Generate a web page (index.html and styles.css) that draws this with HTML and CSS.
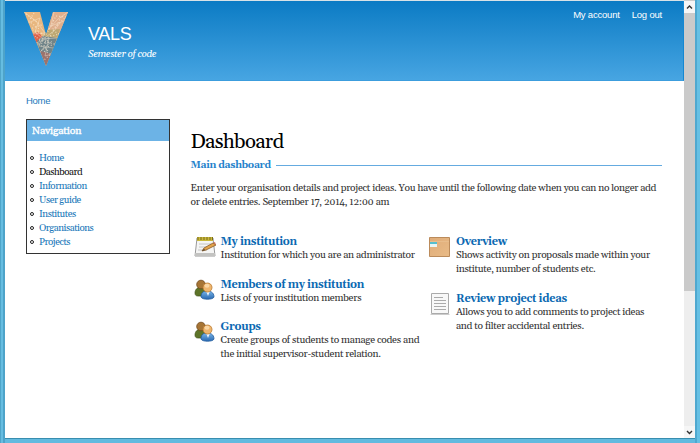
FILE: index.html
```html
<!DOCTYPE html>
<html lang="en">
<head>
<meta charset="utf-8">
<title>Dashboard | VALS</title>
<link rel="stylesheet" href="styles.css">
</head>
<body>
<svg width="0" height="0" class="defs" aria-hidden="true">
  <defs>
    <linearGradient id="blue" x2="0" y2="1"><stop stop-color="#79b5e8"/><stop offset="1" stop-color="#2869b1"/></linearGradient>
    <linearGradient id="tan" x2="1" y2="1"><stop stop-color="#dfac78"/><stop offset="1" stop-color="#e9bb87"/></linearGradient>
    <symbol id="people" viewBox="0 0 22 22">
      <path d="M1 14c0-4 3-6 6-6s6 2 6 6l-3 3H4c-2 0-3-1-3-3z" fill="#5d7428" stroke="#405219" stroke-width=".7"/>
      <circle cx="7" cy="5.500" r="4.300" fill="#a77535" stroke="#71491c" stroke-width=".8"/>
      <path d="M7 18c0-5 3-6 6-6s7 1 7 6c-1 3-12 3-13 0z" fill="url(#blue)" stroke="#235da0" stroke-width=".8"/>
      <path d="M12 12l2 5 2-5z" fill="#eef5fc"/>
      <circle cx="13.500" cy="8.500" r="4.500" fill="#eeb56d" stroke="#b9792e" stroke-width=".8"/>
      <ellipse cx="13" cy="6.800" rx="2.500" ry="2" fill="#fad7a4"/>
    </symbol>
  </defs>
</svg>
<div class="window">
  <div class="page">
    <header class="header">
      <svg class="logo" width="46" height="56" viewBox="0 0 46 56" aria-hidden="true">
        <defs><clipPath id="vee"><path d="M1 1H17L23 24 30 1H45L23 55z"/></clipPath></defs>
        <g clip-path="url(#vee)">
          <path d="M0 0H46V56H0z" fill="#e9b780"/>
          <path d="M17 0H46V23L27 20z" fill="#dfb08e"/>
          <path d="M9 23L16 21 20 28 13 32z" fill="#dc634c"/>
          <path d="M23 19L37 18 34 28 20 25z" fill="#bea873"/>
          <path d="M14 30L20 25 34 27 28 44 17 41z" fill="#718489"/>
          <path d="M17 40L29 43 23 56z" fill="#9b736e"/>
          <g class="mesh">
            <path d="M1 1L13 10 22 22 35 8 45 1M5 12L17 7 12 21 20 28 31 20 37 12M10 23L22 22 16 35 30 37M13 32L26 27 22 45 29 43M20 28L34 27M17 41L29 30M31 1L28 15 41 10"/>
            <path class="dots" d="M3 3L18 14 7 18 23 24 33 5 43 6 29 19 36 23 15 29 31 33 18 39 28 43 21 49"/>
            <path class="dots" d="M11 2L6 10 16 18 12 26 25 31 16 33 25 40 21 35 34 14 39 4"/>
          </g>
        </g>
      </svg>
      <div class="brand">
        <div class="site-name">VALS</div>
        <div class="slogan">Semester of code</div>
      </div>
      <nav class="user-menu"><a>My account</a><a>Log out</a></nav>
    </header>
    <div class="breadcrumb">Home</div>
    <div class="columns">
      <aside class="navigation">
        <h2>Navigation</h2>
        <ul>
          <li><a>Home</a></li>
          <li class="active"><a>Dashboard</a></li>
          <li><a>Information</a></li>
          <li><a>User guide</a></li>
          <li><a>Institutes</a></li>
          <li><a>Organisations</a></li>
          <li><a>Projects</a></li>
        </ul>
      </aside>
      <main>
        <h1>Dashboard</h1>
        <div class="legend"><span>Main dashboard</span></div>
        <p class="intro">Enter your organisation details and project ideas. You have until the following date when you can no longer add<br>or delete entries. September 17, 2014, 12:00 am</p>
        <div class="cards">
          <div class="stack">
            <section class="card">
              <svg width="22" height="22" viewBox="0 0 22 22"><path d="M3 2H19L21 20H1z" fill="#f5f5f4" stroke="#999" /><path d="M1 17H21V20H1z" fill="#c3c3c1"/><path d="M3 1H19V5H3z" fill="#c9b83b"/><path d="M4 1V4M7 1V4M10 1V4M13 1V4M16 1V4M18.500 1V4" stroke="#786b1c"/><path d="M5 8H17M5 11H14M4 14H13" stroke="#c4c4c4"/><path d="M8 15L10 12 19 7 22 9 12 14z" fill="#e2a34c" stroke="#8a5a25" stroke-width=".8"/><path d="M8 15L10 13 11 14z" fill="#333"/><path d="M19 7L21 6 22 9z" fill="#ca6b51"/></svg>
              <div><h3>My institution</h3><p>Institution for which you are an administrator</p></div>
            </section>
            <section class="card">
              <svg width="22" height="22"><use href="#people"/></svg>
              <div><h3>Members of my institution</h3><p>Lists of your institution members</p></div>
            </section>
            <section class="card">
              <svg width="22" height="22"><use href="#people"/></svg>
              <div><h3>Groups</h3><p>Create groups of students to manage codes and<br>the initial supervisor-student relation.</p></div>
            </section>
          </div>
          <div class="stack">
            <section class="card">
              <svg width="22" height="22" viewBox="0 0 22 22"><path d="M.5 1.500H20.500V20.500H.5z" fill="url(#tan)" stroke="#bb8b5b"/><path d="M1 5.500H20" stroke="#e8bd8c"/><path d="M1 6H8V11H1z" fill="#e8f6f5"/><path d="M1 6H8V8H1z" fill="#55bfcf"/></svg>
              <div><h3>Overview</h3><p>Shows activity on proposals made within your<br>institute, number of students etc.</p></div>
            </section>
            <section class="card">
              <svg width="22" height="22" viewBox="0 0 22 22"><path d="M2.500 .5H19.500V20.500H2.500z" fill="#f8f8f8" stroke="#aaa"/><path d="M1.500 21.500H20.500" stroke="#ccc"/><path d="M5 4.500H14M5 7.500H17M5 10.500H17M5 13.500H17M5 16.500H17" stroke="#aaa"/></svg>
              <div><h3>Review project ideas</h3><p>Allows you to add comments to project ideas<br>and to filter accidental entries.</p></div>
            </section>
          </div>
        </div>
      </main>
    </div>
  </div>
  <div class="scrollbar">
    <svg width="11" height="12" viewBox="0 0 11 12"><path d="M3 7.500L5.500 5 8 7.500"/></svg>
    <div class="thumb"></div>
    <svg class="down" width="11" height="12" viewBox="0 0 11 12"><path d="M3 5L5.500 7.500 8 5"/></svg>
  </div>
</div>
</body>
</html>
```
FILE: styles.css
```css
*, *::before { box-sizing: border-box; }
body { margin: 0; height: 443px; overflow: hidden; font-family: Georgia, Gelasio, "Liberation Serif", serif; font-size: 10.2px; letter-spacing: -.28px; color: #333; background: #61b9dd; }
h1, h2, h3, p, ul { margin: 0; padding: 0; font-weight: normal; }
.defs { position: absolute; }
.window { display: flex; width: 700px; height: 443px; padding: 0 5px 4px; background: linear-gradient(90deg, #4fa5ca 1px, #66bde1 1px 3px, #4ea3c9 3px 5px, #62badf 5px 695px, #4fa8cf 695px 697px, #66c0e4 697px); }
.page { width: 679px; background: #fff; border-top: 1px solid #d8e2e7; border-bottom: 1px solid #398eaf; }
.header { height: 80px; display: flex; background: linear-gradient(#0b7bc4, #47a5e2); border-bottom: 1px solid #3c9ddd; border-right: 1px solid #1588d2; }
.logo { margin: 10px 0 0 18px; }
.mesh { fill: none; stroke: #fff2dd; stroke-width: .6; opacity: .65; }
.dots { stroke-width: 1.2; stroke-dasharray: 1 2; }
.brand { margin: 22px 0 0 19px; color: #fff; }
.site-name { font: 18px/22px "Liberation Sans", sans-serif; letter-spacing: -.3px; }
.slogan { font-style: italic; line-height: 16px; letter-spacing: -.42px; font-size: 10px; margin-top: 1px; }
.user-menu { display: flex; gap: 12px; margin: 7px 21px 0 auto; color: #fff; font: 9.5px/13px "Liberation Sans", sans-serif; letter-spacing: -.2px; }
.breadcrumb { margin: 13px 0 0 21px; height: 14px; font: 9.5px/14px "Liberation Sans", sans-serif; letter-spacing: -.3px; color: #2379ba; }
.columns { display: flex; margin-top: 11px; padding-left: 21px; }
.navigation { width: 144px; height: 135px; border: 1px solid #333; }
.navigation h2 { height: 21px; padding-left: 5px; font-size: 10.5px; line-height: 22px; letter-spacing: -.15px; color: #fff; background: #6cb3e6; -webkit-text-stroke: .35px; }
.navigation ul { list-style: none; padding: 10px 0 0 3px; }
.navigation li { height: 14px; line-height: 14px; display: flex; align-items: center; gap: 5px; color: #1978b9; font-size: 9.8px; letter-spacing: -.48px; }
.navigation li::before { content: ""; width: 4px; height: 4px; border: 1px solid #222; border-radius: 50%; }
.navigation .active { color: #111; }
main { margin-left: 20.500px; width: 471.500px; white-space: nowrap; }
h1 { margin-top: 9px; font-size: 20.4px; line-height: 28px; letter-spacing: -.65px; color: #000; }
.legend { display: flex; align-items: center; gap: 5px; margin-top: 2px; font-size: 10px; line-height: 14px; font-weight: bold; color: #2582cb; }
.legend::after { content: ""; flex: 1; height: 1px; background: #65abe0; }
.intro { margin-top: 9px; line-height: 14px; letter-spacing: -.31px; }
.cards { display: flex; margin-top: 26px; }
.stack { width: 235.500px; display: flex; flex-direction: column; gap: 15.500px; }
.card { display: flex; gap: 5px; padding-left: 3px; }
.card svg { margin-top: 1px; flex: none; }
h3 { font-weight: bold; font-size: 11px; line-height: 14px; height: 13px; color: #0b69b2; }
.card p { line-height: 14px; }
.scrollbar { width: 11px; display: flex; flex-direction: column; background: #eee; border-top: 1px solid #ccc; border-bottom: 1px solid #398eaf; }
.scrollbar svg { background: #f6f6f6; }
.scrollbar path { fill: none; stroke: #333; stroke-width: 1.4; }
.thumb { height: 278px; background: #cacaca; }
.down { margin-top: auto; }
```
